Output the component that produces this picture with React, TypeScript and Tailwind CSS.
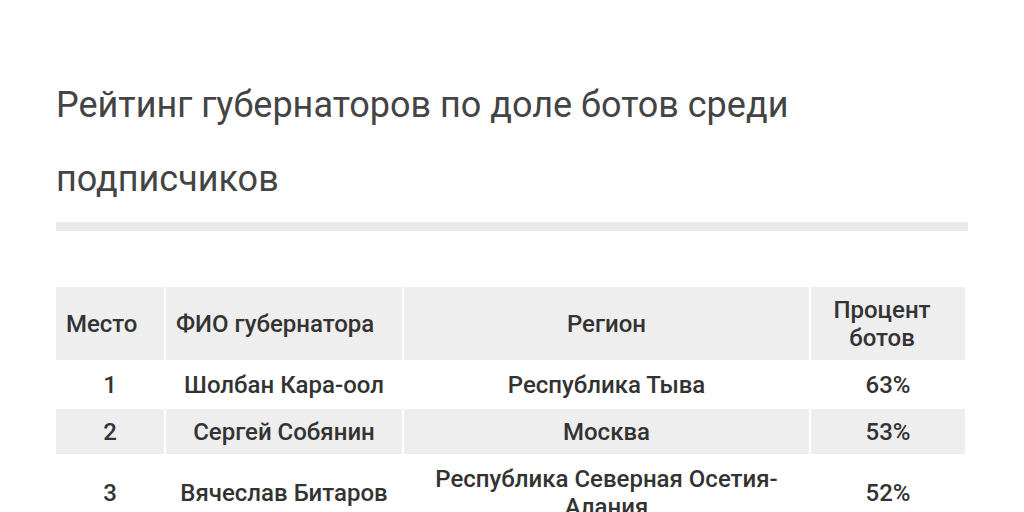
const rows = [
  { place: "1", name: "Шолбан Кара-оол", region: "Республика Тыва", pct: "63%" },
  { place: "2", name: "Сергей Собянин", region: "Москва", pct: "53%" },
  { place: "3", name: "Вячеслав Битаров", region: "Республика Северная Осетия-Алания", pct: "52%" },
];

const App = () => {
  return (
    <div className="w-[1024px] h-[512px] overflow-hidden bg-white font-['Roboto',sans-serif]">
      <div className="pl-[56px] pr-[56px] pt-[68px]">
        <h1 className="text-[36px] leading-[74px] font-normal text-[#444444]">
          Рейтинг губернаторов по доле ботов среди подписчиков
        </h1>
        <div className="mt-[6px] h-[9px] w-[912px] bg-[#e9e9e9]" />
        <table className="mt-[54px] -ml-[2px] border-separate border-spacing-x-[2px] border-spacing-y-[2px] text-[24px] leading-7 font-medium text-[#333333]">
          <thead>
            <tr className="bg-[#eeeeee]">
              <th className="w-[108px] px-[10px] pt-[9px] pb-[8px] text-left font-medium">Место</th>
              <th className="w-[236px] px-[10px] pt-[9px] pb-[8px] text-left font-medium">ФИО губернатора</th>
              <th className="w-[405px] px-[10px] pt-[9px] pb-[8px] text-center font-medium">Регион</th>
              <th className="w-[154px] pl-[10px] pr-[22px] pt-[9px] pb-[8px] text-center font-medium">Процент ботов</th>
            </tr>
          </thead>
          <tbody>
            {rows.map((r, i) => (
              <tr key={r.place} className={i % 2 === 1 ? "bg-[#eeeeee]" : "bg-white"}>
                <td className="px-[10px] pt-[9px] pb-[8px] text-center">{r.place}</td>
                <td className="px-[10px] pt-[9px] pb-[8px] text-center">{r.name}</td>
                <td className="px-[10px] pt-[9px] pb-[8px] text-center">{r.region}</td>
                <td className="px-[10px] pt-[9px] pb-[8px] text-center">{r.pct}</td>
              </tr>
            ))}
          </tbody>
        </table>
      </div>
    </div>
  );
};

export default App;
